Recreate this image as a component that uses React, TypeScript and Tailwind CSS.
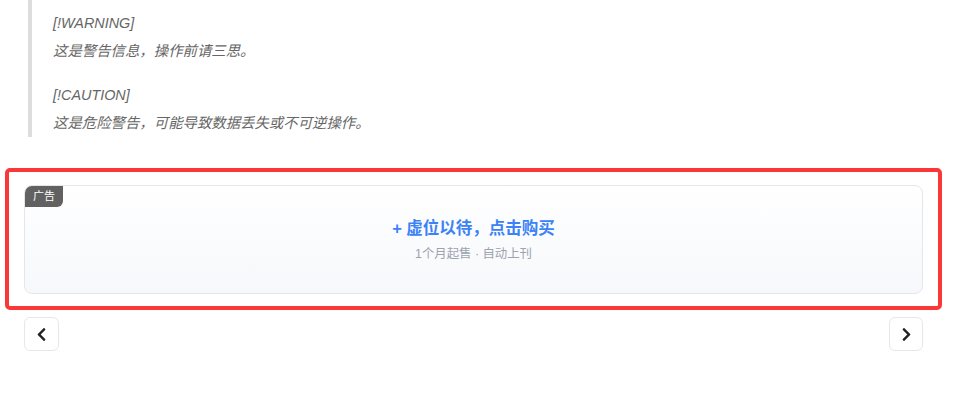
import { FaChevronLeft, FaChevronRight } from "react-icons/fa";

const notes = [
  { tag: "[!WARNING]", text: "这是警告信息，操作前请三思。" },
  { tag: "[!CAUTION]", text: "这是危险警告，可能导致数据丢失或不可逆操作。" },
];

export default function App() {
  return (
    <div
      className="min-h-[419px] w-[954px] bg-white"
      style={{ fontFamily: '"Liberation Sans", "Noto Sans CJK SC", sans-serif' }}
    >
      {/* callouts rendered as plain quote */}
      <div className="pl-[28px]">
        <blockquote className="border-l-4 border-[#dddddd] pl-[21px] pt-[9px] text-[14.4px] italic leading-[28px] text-[#666666]">
          {notes.map((n, i) => (
            <p key={n.tag} className={i === 0 ? "mb-[16px]" : ""}>
              {n.tag}
              <br />
              {n.text}
            </p>
          ))}
        </blockquote>
      </div>

      {/* ad slot, highlighted */}
      <div className="ml-[5px] mt-[31px] w-[937px] rounded-[5px] border-4 border-[#fb3737] px-[15px] pb-[12px] pt-[13px]">
        <a className="relative flex h-[109px] cursor-pointer flex-col items-center justify-center gap-[5px] overflow-hidden rounded-lg border border-[#e3e6ec] bg-gradient-to-b from-white to-[#f6f8fb]">
          <span className="absolute left-0 top-0 rounded-br-md bg-[#616161] px-[8px] text-[11px] leading-[21px] text-white">
            广告
          </span>
          <span className="text-[16.5px] font-bold leading-[24px] text-[#3b82f6]">+ 虚位以待，点击购买</span>
          <span className="text-[12.4px] leading-[18px] text-[#9ca3af]">1个月起售 · 自动上刊</span>
        </a>
      </div>

      {/* prev / next */}
      <div className="ml-[24px] mt-[7px] flex w-[899px] justify-between">
        <button className="flex h-[34px] w-[35px] items-center justify-center rounded-md border border-[#e5e7eb] bg-white text-[#222]">
          <FaChevronLeft size={15} />
        </button>
        <button className="flex h-[34px] w-[34px] items-center justify-center rounded-md border border-[#e5e7eb] bg-white text-[#222]">
          <FaChevronRight size={15} />
        </button>
      </div>
    </div>
  );
}
